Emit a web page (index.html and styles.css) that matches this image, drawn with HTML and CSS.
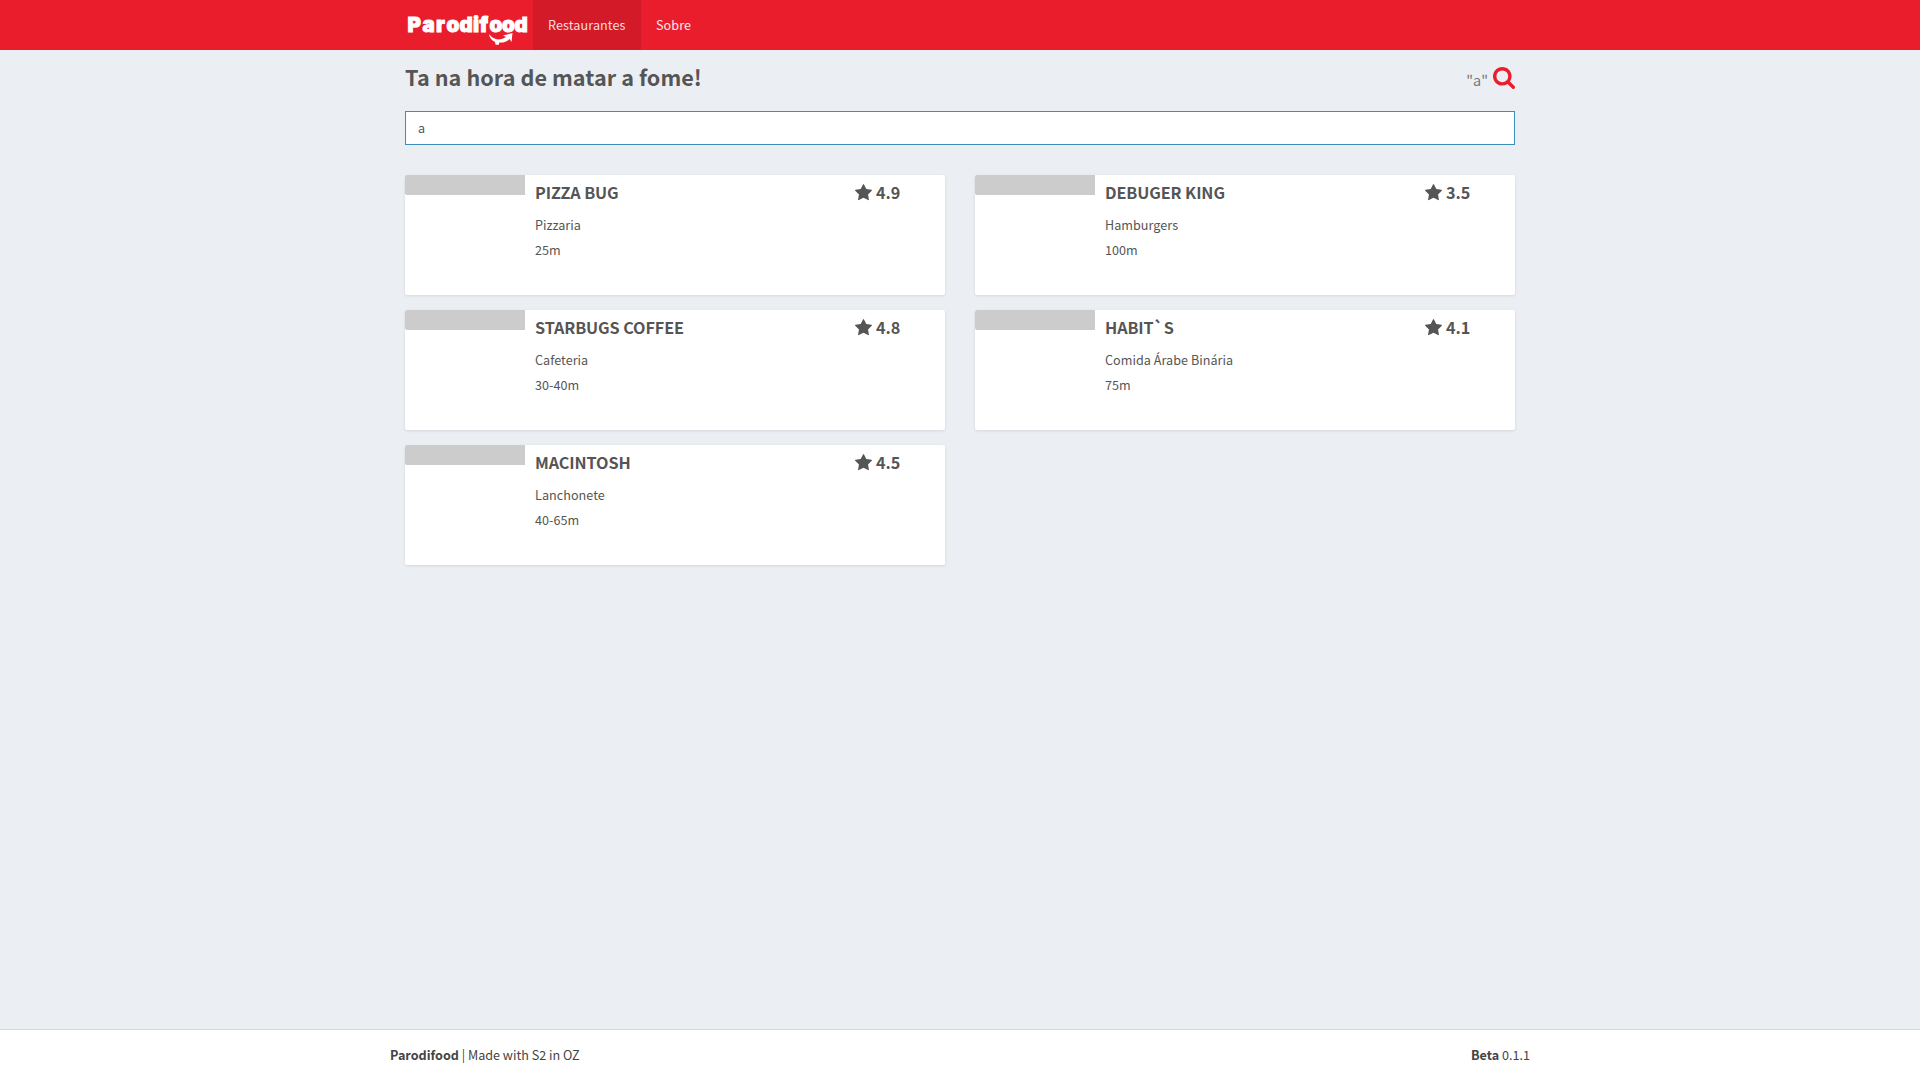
FILE: index.html
```html
<!DOCTYPE html>
<html lang="pt-BR">
<head>
<meta charset="utf-8">
<title>Parodifood</title>
<link rel="stylesheet" href="styles.css">
</head>
<body>
<svg width="0" height="0" class="sprite" aria-hidden="true">
  <symbol id="star" viewBox="0 0 1664 1664"><path d="M1664 615q0 22-26 48l-363 354 86 500q1 7 1 20 0 21-10.500 35.500t-30.500 14.500q-19 0-40-12l-449-236-449 236q-22 12-40 12-21 0-31.500-14.500t-10.500-35.500q0-6 2-20l86-500-364-354q-25-27-25-48 0-37 56-46l502-73 225-455q19-41 49-41t49 41l225 455 502 73q56 9 56 46z"/></symbol>
</svg>
<header class="navbar">
  <div class="container navbar-row">
    <a class="brand">
      <svg class="logo" width="122" height="36" viewBox="0 0 122 36">
        <text class="logo-text" x="0.500 15.500 29 39.500 52.500 66 72.500 82.500 95 107.500" y="23">Parodifood</text>
        <path d="M82 25c4 6 11 7 17 3l-3-1.500 9.500-2.500-1 9-2-3c-3 3-7 4-10 3.500l-1 2.500-3-.5-.5-2.500c-3-1.500-5.500-4-6-8z"/>
      </svg>
    </a>
    <nav class="menu">
      <a class="menu-link active">Restaurantes</a>
      <a class="menu-link">Sobre</a>
    </nav>
  </div>
</header>
<main class="container content">
  <div class="heading">
    <h1>Ta na hora de matar a fome!</h1>
    <div class="search-toggle">
      <span>"a"</span>
      <svg width="22" height="22" viewBox="0 0 1664 1664"><path d="M1152 704q0-185-131.500-316.500t-316.500-131.500-316.500 131.500-131.500 316.500 131.500 316.500 316.500 131.500 316.500-131.500 131.500-316.500zm512 832q0 52-38 90t-90 38q-54 0-90-38l-343-342q-179 124-399 124-143 0-273.500-55.500t-225-150-150-225-55.500-273.500 55.500-273.500 150-225 225-150 273.500-55.500 273.500 55.500 225 150 150 225 55.500 273.500q0 220-124 399l343 343q37 37 37 90z"/></svg>
    </div>
  </div>
  <input class="search" type="text" value="a">
  <section class="grid">
    <article class="card"><div class="thumb"></div><div class="info"><h2>PIZZA BUG</h2><p>Pizzaria</p><p>25m</p></div><div class="rating"><svg width="17" height="17"><use href="#star"/></svg>4.9</div></article>
    <article class="card"><div class="thumb"></div><div class="info"><h2>DEBUGER KING</h2><p>Hamburgers</p><p>100m</p></div><div class="rating"><svg width="17" height="17"><use href="#star"/></svg>3.5</div></article>
    <article class="card"><div class="thumb"></div><div class="info"><h2>STARBUGS COFFEE</h2><p>Cafeteria</p><p>30-40m</p></div><div class="rating"><svg width="17" height="17"><use href="#star"/></svg>4.8</div></article>
    <article class="card"><div class="thumb"></div><div class="info"><h2>HABIT`S</h2><p>Comida Árabe Binária</p><p>75m</p></div><div class="rating"><svg width="17" height="17"><use href="#star"/></svg>4.1</div></article>
    <article class="card"><div class="thumb"></div><div class="info"><h2>MACINTOSH</h2><p>Lanchonete</p><p>40-65m</p></div><div class="rating"><svg width="17" height="17"><use href="#star"/></svg>4.5</div></article>
  </section>
</main>
<footer class="footer">
  <div class="container footer-row">
    <div><b>Parodifood</b> | Made with S2 in OZ</div>
    <div><b>Beta</b> 0.1.1</div>
  </div>
</footer>
</body>
</html>
```
FILE: styles.css
```css
* { box-sizing: border-box; }
body {
  margin: 0;
  min-height: 100vh;
  display: flex;
  flex-direction: column;
  background: #ebeff4;
  color: #555;
  font: 12.6px/20px "Noto Sans CJK SC", "Noto Sans", sans-serif;
}
h1, h2, p { margin: 0; }
.sprite { position: absolute; }
.container { width: 1140px; margin: 0 auto; }
.navbar { background: #ea1d2c; height: 50px; }
.navbar-row { display: flex; height: 50px; padding-left: 15px; }
.brand { width: 128px; padding: 9px 0 0 2px; }
.logo { display: block; fill: #fff; }
.logo-text { font: 900 20.5px Inter, sans-serif; stroke: #fff; stroke-width: .9px; }
.menu { display: flex; }
.menu-link { padding: 15px; color: #fff; opacity: .9; letter-spacing: .1px; }
.menu-link.active { width: 108px; background: #d31a28; opacity: 1; color: #fbdadd; }
.content { flex: 1; padding: 15px 15px 0; }
.heading { display: flex; justify-content: space-between; height: 46px; }
h1 { font-size: 21.6px; line-height: 24px; font-weight: 700; letter-spacing: .06px; }
.search-toggle { display: flex; gap: 5px; color: #777; font-size: 14.4px; line-height: 30px; }
.search-toggle svg { margin-top: 2px; fill: #ea1d2c; }
.search {
  display: block;
  width: 100%;
  height: 34px;
  padding: 5px 12px 7px;
  border: 1px solid #3c8dbc;
  outline: 0;
  background: #fff;
  color: #555;
  font: inherit;
}
.grid { display: grid; grid-template-columns: 540px 540px; gap: 15px 30px; margin-top: 30px; }
.card {
  display: flex;
  height: 120px;
  background: #fff;
  border-radius: 2px;
  box-shadow: 0 1px 3px rgba(0, 0, 0, .1);
}
.thumb { width: 120px; height: 20px; background: #ccc; border-radius: 2px 0 0 2px; }
.info { width: 320px; padding: 5px 10px; }
h2 { font-size: 16.2px; line-height: 25px; font-weight: 700; letter-spacing: -.1px; }
.info p { line-height: 25px; letter-spacing: .04px; }
.info h2 + p { margin-top: 7px; }
.rating { display: flex; gap: 4px; padding: 5px 0 0 10px; font-size: 16.2px; line-height: 25px; font-weight: 700; }
.rating svg { margin-top: 4px; fill: #555; }
.footer { height: 51px; background: #fff; border-top: 1px solid #d2d6de; color: #444; }
.footer-row { display: flex; justify-content: space-between; padding-top: 15px; }
```
